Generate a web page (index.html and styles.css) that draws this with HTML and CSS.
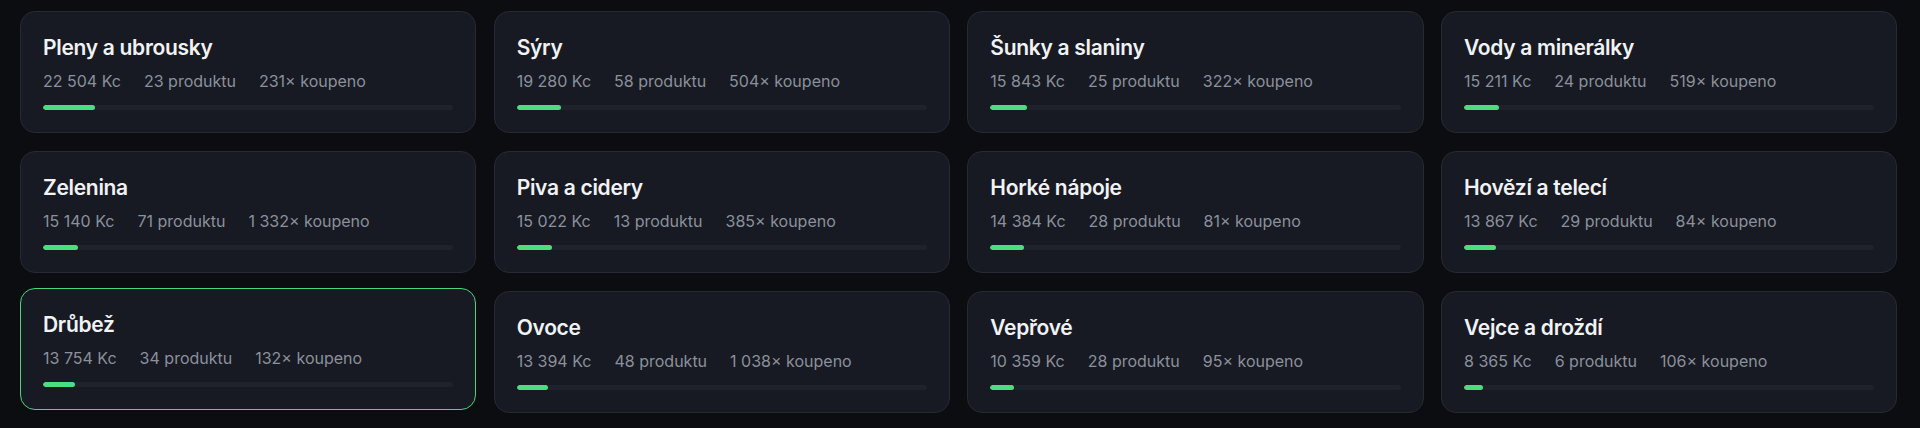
FILE: index.html
```html
<!DOCTYPE html>
<html lang="cs">
<head>
<meta charset="utf-8">
<title>Kategorie</title>
<link rel="stylesheet" href="styles.css">
</head>
<body>
<div class="grid">
  <div class="card"><div class="title">Pleny a ubrousky</div><div class="meta"><span>22 504 Kc</span><span>23 produktu</span><span>231× koupeno</span></div><div class="track"><div class="fill" style="width:12.7%"></div></div></div>
  <div class="card"><div class="title">Sýry</div><div class="meta"><span>19 280 Kc</span><span>58 produktu</span><span>504× koupeno</span></div><div class="track"><div class="fill" style="width:10.9%"></div></div></div>
  <div class="card"><div class="title">Šunky a slaniny</div><div class="meta"><span>15 843 Kc</span><span>25 produktu</span><span>322× koupeno</span></div><div class="track"><div class="fill" style="width:8.9%"></div></div></div>
  <div class="card"><div class="title">Vody a minerálky</div><div class="meta"><span>15 211 Kc</span><span>24 produktu</span><span>519× koupeno</span></div><div class="track"><div class="fill" style="width:8.6%"></div></div></div>

  <div class="card"><div class="title">Zelenina</div><div class="meta"><span>15 140 Kc</span><span>71 produktu</span><span>1 332× koupeno</span></div><div class="track"><div class="fill" style="width:8.5%"></div></div></div>
  <div class="card"><div class="title">Piva a cidery</div><div class="meta"><span>15 022 Kc</span><span>13 produktu</span><span>385× koupeno</span></div><div class="track"><div class="fill" style="width:8.5%"></div></div></div>
  <div class="card"><div class="title">Horké nápoje</div><div class="meta"><span>14 384 Kc</span><span>28 produktu</span><span>81× koupeno</span></div><div class="track"><div class="fill" style="width:8.1%"></div></div></div>
  <div class="card"><div class="title">Hovězí a telecí</div><div class="meta"><span>13 867 Kc</span><span>29 produktu</span><span>84× koupeno</span></div><div class="track"><div class="fill" style="width:7.8%"></div></div></div>

  <div class="card card--active"><div class="title">Drůbež</div><div class="meta"><span>13 754 Kc</span><span>34 produktu</span><span>132× koupeno</span></div><div class="track"><div class="fill" style="width:7.8%"></div></div></div>
  <div class="card"><div class="title">Ovoce</div><div class="meta"><span>13 394 Kc</span><span>48 produktu</span><span>1 038× koupeno</span></div><div class="track"><div class="fill" style="width:7.6%"></div></div></div>
  <div class="card"><div class="title">Vepřové</div><div class="meta"><span>10 359 Kc</span><span>28 produktu</span><span>95× koupeno</span></div><div class="track"><div class="fill" style="width:5.8%"></div></div></div>
  <div class="card"><div class="title">Vejce a droždí</div><div class="meta"><span>8 365 Kc</span><span>6 produktu</span><span>106× koupeno</span></div><div class="track"><div class="fill" style="width:4.7%"></div></div></div>
</div>
</body>
</html>
```
FILE: styles.css
```css
html, body {
  margin: 0;
  padding: 0;
  background: #0b0d11;
}
body {
  font-family: Inter, "Noto Sans", "Liberation Sans", sans-serif;
  color: #eef0f3;
  height: 428px;
  overflow: hidden;
}
.grid {
  display: grid;
  grid-template-columns: repeat(4, 1fr);
  column-gap: 17.33px;
  row-gap: 18px;
  padding: 11px 22.67px 0 20px;
}
.card {
  background: #171a22;
  border: 1px solid #262a33;
  border-radius: 15px;
  padding: 22px;
  display: flex;
  flex-direction: column;
}
.card--active {
  border-color: #4bd47d;
  transform: translateY(-3px);
}
.title {
  font-size: 21px;
  line-height: 28px;
  font-weight: 600;
  letter-spacing: -0.3px;
  color: #f1f2f5;
}
.meta {
  margin-top: 7px;
  display: flex;
  gap: 23px;
  font-size: 16px;
  line-height: 24px;
  color: #8b909c;
}
.track {
  margin-top: 12px;
  height: 5px;
  border-radius: 3px;
  background: #1f222a;
  overflow: hidden;
}
.fill {
  height: 100%;
  border-radius: 3px;
  background: #4ade80;
}
```
